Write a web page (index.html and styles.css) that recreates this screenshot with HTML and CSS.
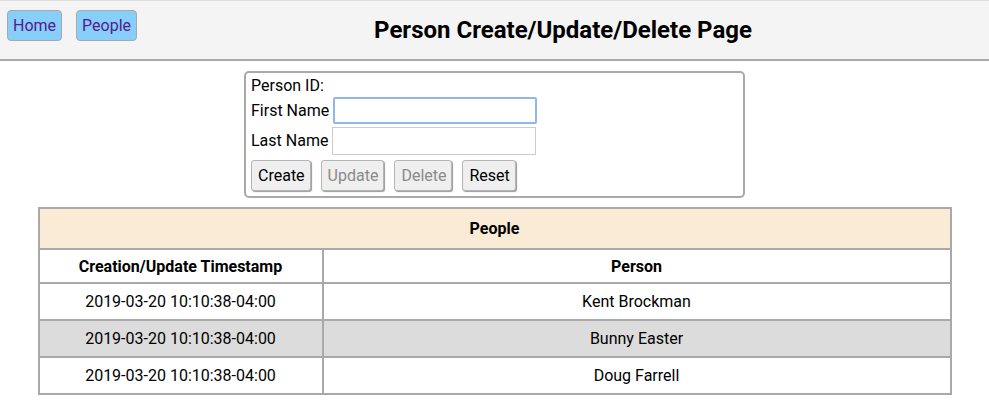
FILE: index.html
```html
<!DOCTYPE html>
<html>
<head>
<meta charset="utf-8">
<link rel="stylesheet" href="styles.css">
</head>
<body>
<header class="topbar">
  <nav class="nav">
    <button class="nav-btn"><a href="#">Home</a></button>
    <button class="nav-btn"><a href="#">People</a></button>
  </nav>
  <h1 class="title">Person Create/Update/Delete Page</h1>
</header>
<main class="main">
  <form class="person-form">
    <div class="row id-row">Person ID:</div>
    <div class="row first-row"><label>First Name</label><input class="field focused" type="text"></div>
    <div class="row last-row"><label>Last Name</label><input class="field" type="text"></div>
    <div class="row buttons">
      <button type="button" class="btn">Create</button>
      <button type="button" class="btn" disabled>Update</button>
      <button type="button" class="btn" disabled>Delete</button>
      <button type="button" class="btn">Reset</button>
    </div>
  </form>
  <table class="people">
    <thead>
      <tr><th colspan="2" class="caption">People</th></tr>
      <tr><th class="c1">Creation/Update Timestamp</th><th>Person</th></tr>
    </thead>
    <tbody>
      <tr><td>2019-03-20 10:10:38-04:00</td><td>Kent Brockman</td></tr>
      <tr class="alt"><td>2019-03-20 10:10:38-04:00</td><td>Bunny Easter</td></tr>
      <tr><td>2019-03-20 10:10:38-04:00</td><td>Doug Farrell</td></tr>
    </tbody>
  </table>
</main>
</body>
</html>
```
FILE: styles.css
```css
html, body { margin: 0; padding: 0; background: #fff; }
body { font-family: Roboto, "Liberation Sans", sans-serif; font-size: 16px; color: #000; }

.topbar {
  display: flex;
  align-items: flex-start;
  height: 58px;
  background: #f4f4f4;
  border-top: 1px solid #dcdcdc;
  border-bottom: 2px solid #a9a9a9;
}
.nav { display: flex; gap: 14px; padding: 9px 0 0 7px; }
.nav-btn {
  height: 31px;
  padding: 0 5px;
  background: #87cefa;
  border: 1px solid #a9a9a9;
  border-radius: 4px;
  font-family: Roboto, "Liberation Sans", sans-serif;
  font-size: 16px;
}
.nav-btn a { color: #551a8b; text-decoration: none; }
.title {
  flex: 1;
  margin: 0;
  padding-top: 14px;
  text-align: center;
  font-size: 24px;
  font-weight: bold;
  line-height: 30px;
}

.main { display: flex; flex-direction: column; align-items: center; padding-top: 10px; }
.person-form {
  width: 487px;
  border: 2px solid #a9a9a9;
  border-radius: 5px;
  padding: 4px 5px 5px 5px;
  display: flex;
  flex-direction: column;
}
.row { display: flex; align-items: center; line-height: 18px; }
.row label { margin-right: 4px; }
.first-row { margin-top: 2px; }
.last-row { margin-top: 3px; }
.field {
  box-sizing: border-box;
  width: 204px;
  height: 28px;
  padding: 1px 3px;
  border: 1px solid #ccc;
  font-size: 16px;
  margin: 0;
}
.field.focused { border: 2px solid #8fb7ec; border-radius: 2px; height: 27px; outline: none; }
.buttons { gap: 10px; margin-top: 5px; }
.btn {
  height: 31px;
  padding: 0 5px 0 6px;
  background: #efefef;
  border: 1px solid #b4b4b4;
  border-radius: 3px;
  box-shadow: 1px 1px 1px #999;
  font-family: Roboto, "Liberation Sans", sans-serif;
  font-size: 16px;
  color: #000;
}
.btn:disabled { color: #8a8a8a; }

.people {
  margin-top: 9px;
  width: 914px;
  border-collapse: collapse;
  border: 2px solid #a9a9a9;
}
.people th, .people td {
  border: 2px solid #a9a9a9;
  height: 35px;
  padding: 0;
  text-align: center;
  font-size: 16px;
}
.people th { font-weight: bold; height: 32px; }
.people .caption { background: #faebd7; height: 39px; }
.people .c1 { width: 282px; }
.people .alt td { background: #dcdcdc; }
```
